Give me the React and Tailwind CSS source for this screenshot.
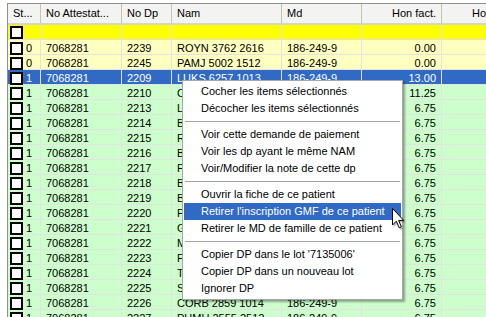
import React from 'react';

// Grille de demandes de paiement (style Windows XP) avec menu contextuel ouvert
const COLS = 'grid grid-cols-[33px_81px_50px_110px_80px_80px_80px]';

const rows = [
  { kind: 'new' },
  { st: '0', att: '7068281', dp: '2239', nam: 'ROYN 3762 2616', md: '186-249-9', hon: '0.00', kind: 'pending' },
  { st: '0', att: '7068281', dp: '2245', nam: 'PAMJ 5002 1512', md: '186-249-9', hon: '0.00', kind: 'pending' },
  { st: '1', att: '7068281', dp: '2209', nam: 'LUKS 6257 1013', md: '186-249-9', hon: '13.00', kind: 'selected' },
  { st: '1', att: '7068281', dp: '2210', nam: 'CARL 4512 2208', md: '186-249-9', hon: '11.25' },
  { st: '1', att: '7068281', dp: '2213', nam: 'LAPM 5310 1117', md: '186-249-9', hon: '6.75' },
  { st: '1', att: '7068281', dp: '2214', nam: 'BOUJ 4207 0915', md: '186-249-9', hon: '6.75' },
  { st: '1', att: '7068281', dp: '2215', nam: 'RICM 6102 2314', md: '186-249-9', hon: '6.75' },
  { st: '1', att: '7068281', dp: '2216', nam: 'BELL 3911 0512', md: '186-249-9', hon: '6.75' },
  { st: '1', att: '7068281', dp: '2217', nam: 'PELA 5803 1716', md: '186-249-9', hon: '6.75' },
  { st: '1', att: '7068281', dp: '2218', nam: 'BERG 4406 2010', md: '186-249-9', hon: '6.75' },
  { st: '1', att: '7068281', dp: '2219', nam: 'BLAN 3209 0811', md: '186-249-9', hon: '6.75' },
  { st: '1', att: '7068281', dp: '2220', nam: 'PARD 5711 1413', md: '186-249-9', hon: '6.75' },
  { st: '1', att: '7068281', dp: '2221', nam: 'GAGN 6004 2517', md: '186-249-9', hon: '6.75' },
  { st: '1', att: '7068281', dp: '2222', nam: 'MORI 4810 0619', md: '186-249-9', hon: '6.75' },
  { st: '1', att: '7068281', dp: '2223', nam: 'POIR 3507 1218', md: '186-249-9', hon: '6.75' },
  { st: '1', att: '7068281', dp: '2224', nam: 'TREM 5212 2715', md: '186-249-9', hon: '6.75' },
  { st: '1', att: '7068281', dp: '2225', nam: 'SIMA 4103 0914', md: '186-249-9', hon: '6.75' },
  { st: '1', att: '7068281', dp: '2226', nam: 'CORB 2859 1014', md: '186-249-9', hon: '6.75' },
  { st: '1', att: '7068281', dp: '2227', nam: 'PUMU 2555 2512', md: '186-249-9', hon: '6.75' },
];

const rowStyles = {
  new: 'bg-[#ffff00] text-black',
  pending: 'bg-[#ffffc0] text-black',
  selected: 'bg-[#316ac5] text-white',
  done: 'bg-[#ccffcc] text-black',
};

const menu = [
  'Cocher les items sélectionnés',
  'Décocher les items sélectionnés',
  '-',
  'Voir cette demande de paiement',
  'Voir les dp ayant le même NAM',
  'Voir/Modifier la note de cette dp',
  '-',
  'Ouvrir la fiche de ce patient',
  'Retirer l\'inscription GMF de ce patient',
  'Retirer le MD de famille de ce patient',
  '-',
  "Copier DP dans le lot '7135006'",
  'Copier DP dans un nouveau lot',
  'Ignorer DP',
];

const HeaderCell = ({ children, right }) => (
  <div className={`h-full flex items-center px-[5px] border-r border-[#c7c5b2] overflow-hidden whitespace-nowrap ${right ? 'justify-end' : ''}`}>
    {children}
  </div>
);

const Cell = ({ children, right }) => (
  <div className={`h-full flex items-center px-[5px] border-r border-[#e3e3e3] overflow-hidden whitespace-nowrap ${right ? 'justify-end' : ''}`}>
    {children}
  </div>
);

const Checkbox = () => (
  <div className="w-[13px] h-[13px] ml-[1px] border-2 border-black bg-white shrink-0" />
);

const Cursor = () => (
  <svg width="14" height="23" viewBox="0 0 14 23" className="absolute left-[392px] top-[208px]">
    <path d="M1.5 2.5 L1.5 19.5 L5.5 15.5 L8.5 22 L11 21 L8 14.5 L13.5 14.5 Z" fill="rgba(0,0,0,0.25)" />
    <path d="M0.5 0.5 L0.5 17 L4.3 13.2 L7.2 19.8 L9.4 18.8 L6.6 12.4 L11.8 12.4 Z" fill="#fff" stroke="#000" strokeWidth="1" strokeLinejoin="miter" />
  </svg>
);

export default function App() {
  return (
    <div
      className="relative w-[486px] h-[317px] overflow-hidden bg-white pl-[7px] pt-[3px] text-[11px] text-black"
      style={{ fontFamily: '"Liberation Sans", Arial, sans-serif' }}
    >
      <div className="w-full h-full border-l border-t border-[#8e8e8e] overflow-hidden">
        {/* en-tête des colonnes */}
        <div className={`${COLS} h-[21px] bg-[#f3f3f1] border-b-2 border-[#d6d5cb]`}>
          <HeaderCell>St...</HeaderCell>
          <HeaderCell>No Attestat...</HeaderCell>
          <HeaderCell>No Dp</HeaderCell>
          <HeaderCell>Nam</HeaderCell>
          <HeaderCell>Md</HeaderCell>
          <HeaderCell right>Hon fact.</HeaderCell>
          <HeaderCell right>Hon fact.</HeaderCell>
        </div>

        {/* lignes */}
        {rows.map((r, i) => (
          <div
            key={i}
            className={`${COLS} h-[15px] border-b border-[#e3e3e3] ${rowStyles[r.kind || 'done']}`}
          >
            <div className="h-full flex items-center gap-[3px] pl-[1px] border-r border-[#e3e3e3]">
              <Checkbox />
              <span>{r.st}</span>
            </div>
            <Cell>{r.att}</Cell>
            <Cell>{r.dp}</Cell>
            <Cell>{r.nam}</Cell>
            <Cell>{r.md}</Cell>
            <Cell right>{r.hon}</Cell>
            <Cell right>{r.hon2}</Cell>
          </div>
        ))}
      </div>

      {/* menu contextuel */}
      <div className="absolute left-[182px] top-[80px] w-[221px] bg-white border border-[#a7a7a7] py-[2px] px-[1px] shadow-[2px_2px_2px_rgba(0,0,0,0.35)]">
        {menu.map((m, i) =>
          m === '-' ? (
            <div key={i} className="h-[9px] flex items-center px-[1px]">
              <div className="w-full h-px bg-[#a5a5a5]" />
            </div>
          ) : (
            <div
              key={i}
              className={`h-[17px] flex items-center pl-[17px] whitespace-nowrap ${
                i === 8 ? 'bg-[#316ac5] text-white' : 'text-black'
              }`}
            >
              {m}
            </div>
          )
        )}
      </div>

      <Cursor />
    </div>
  );
}
